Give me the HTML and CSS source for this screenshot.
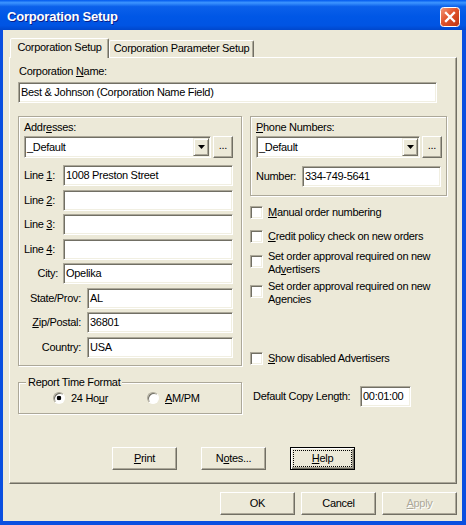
FILE: index.html
```html
<!DOCTYPE html>
<html lang="en">
<head>
  <meta charset="UTF-8" />
  <title>Corporation Setup</title>
  <link rel="stylesheet" href="styles.css">
</head>
<body>
  <div class="window">
    <div class="titlebar">
      <span class="title">Corporation Setup</span>
      <svg class="close" width="20" height="20" viewBox="0 0 20 20">
        <defs>
          <linearGradient id="closeGrad" x1="0" y1="0" x2="1" y2="1">
            <stop offset="0" stop-color="#f39a7c"/>
            <stop offset="0.45" stop-color="#e1542c"/>
            <stop offset="1" stop-color="#bf3410"/>
          </linearGradient>
        </defs>
        <rect x="0.5" y="0.5" width="19" height="19" rx="3" fill="url(#closeGrad)" stroke="#fff"/>
        <path d="M6 6 L14 14 M14 6 L6 14" stroke="#fff" stroke-width="2.3" stroke-linecap="square"/>
      </svg>
    </div>

    <div class="dialog">
      <div class="tabs">
        <div class="tab active">Corporation Setup</div>
        <div class="tab other">Corporation Parameter Setup</div>
      </div>

      <div class="panel">
        <div class="field-label">Corporation <u>N</u>ame:</div>
        <div class="edit name-edit">Best &amp; Johnson (Corporation Name Field)</div>

        <div class="columns">
          <div class="col-left">
            <div class="group addr-group">
              <div class="group-label">Addr<u>e</u>sses:</div>
              <div class="combo-row">
                <div class="combo addr-combo">
                  <span class="combo-text">_Default</span>
                  <span class="drop-btn"><svg width="7" height="4" viewBox="0 0 7 4"><polygon points="0,0 7,0 3.5,4" fill="#000"/></svg></span>
                </div>
                <div class="btn dots">...</div>
              </div>
              <div class="addr-rows">
                <div class="row"><span class="row-label">Line <u>1</u>:</span><div class="edit">1008 Preston Street</div></div>
                <div class="row"><span class="row-label">Line <u>2</u>:</span><div class="edit"></div></div>
                <div class="row"><span class="row-label">Line <u>3</u>:</span><div class="edit"></div></div>
                <div class="row"><span class="row-label">Line <u>4</u>:</span><div class="edit"></div></div>
                <div class="row"><span class="row-label right">City:</span><div class="edit">Opelika</div></div>
                <div class="row wide"><span class="row-label right">State/Prov:</span><div class="edit">AL</div></div>
                <div class="row wide"><span class="row-label right"><u>Z</u>ip/Postal:</span><div class="edit">36801</div></div>
                <div class="row wide"><span class="row-label right">Country:</span><div class="edit">USA</div></div>
              </div>
            </div>

            <fieldset class="report">
              <legend>Report Time Format</legend>
              <div class="radios">
                <span class="radio-item first"><span class="radio checked"></span><span>24 Ho<u>u</u>r</span></span>
                <span class="radio-item"><span class="radio"></span><span><u>A</u>M/PM</span></span>
              </div>
            </fieldset>
          </div>

          <div class="col-right">
            <div class="group phone-group">
              <div class="group-label"><u>P</u>hone Numbers:</div>
              <div class="combo-row">
                <div class="combo phone-combo">
                  <span class="combo-text">_Default</span>
                  <span class="drop-btn"><svg width="7" height="4" viewBox="0 0 7 4"><polygon points="0,0 7,0 3.5,4" fill="#000"/></svg></span>
                </div>
                <div class="btn dots">...</div>
              </div>
              <div class="row number-row"><span class="number-label">Number:</span><div class="edit">334-749-5641</div></div>
            </div>

            <div class="checks">
              <div class="check"><span class="box"></span><span><u>M</u>anual order numbering</span></div>
              <div class="check"><span class="box"></span><span><u>C</u>redit policy check on new orders</span></div>
              <div class="check two"><span class="box"></span><span>Set order approval required on new<br>Ad<u>v</u>ertisers</span></div>
              <div class="check two"><span class="box"></span><span>Set order approval required on new<br>A<u>g</u>encies</span></div>
              <div class="check show-disabled"><span class="box"></span><span><u>S</u>how disabled Advertisers</span></div>
            </div>

            <div class="copy-row">
              <span class="copy-label">Default Copy Length:</span>
              <div class="edit copy-edit">00:01:00</div>
            </div>
          </div>
        </div>

        <div class="panel-buttons">
          <div class="btn small"><span><u>P</u>rint</span></div>
          <div class="btn small"><span>N<u>o</u>tes...</span></div>
          <div class="btn small focus"><span><u>H</u>elp</span></div>
        </div>
      </div>

      <div class="footer">
        <div class="btn large">OK</div>
        <div class="btn large">Cancel</div>
        <div class="btn large disabled"><span><u>A</u>pply</span></div>
      </div>
    </div>
  </div>
</body>
</html>
```

FILE: styles.css
```css
* {
  margin: 0;
  padding: 0;
  box-sizing: border-box;
}

body {
  font-family: 'Liberation Sans', Arial, sans-serif;
  font-size: 11px;
  line-height: 13px;
  letter-spacing: -0.3px;
  color: #000;
  background: #fff;
}

.window {
  width: 466px;
  height: 525px;
  display: flex;
  flex-direction: column;
  background: #0a4fe0;
}

/* title bar */
.titlebar {
  height: 30px;
  flex: none;
  display: flex;
  align-items: center;
  justify-content: space-between;
  padding: 3px 6px 0 7px;
  background: linear-gradient(#0058ee 0%, #3d95ff 9%, #0b60ea 22%, #0057e6 55%, #0054e3 85%, #0047cc 100%);
}

.title {
  font-size: 13px;
  font-weight: bold;
  letter-spacing: -0.2px;
  color: #fff;
  text-shadow: 1px 1px #0a1e8a;
}

.close {
  display: block;
}

/* dialog body */
.dialog {
  flex: 1;
  margin: 0 4px 4px 3px;
  padding: 8px 5px 6px 6px;
  background: #ece9d8;
  display: flex;
  flex-direction: column;
}

.tabs {
  display: flex;
  align-items: flex-end;
  height: 19px;
  padding-left: 1px;
}

.tab {
  height: 17px;
  text-align: center;
  line-height: 15px;
  border: 1px solid;
  border-bottom: none;
  border-color: #fff #716f64 transparent #fff;
  border-radius: 2px 2px 0 0;
  box-shadow: inset -1px 0 #aca899;
  background: #ece9d8;
}

.tab.active {
  width: 99px;
  height: 20px;
  line-height: 17px;
  margin-bottom: -1px;
  z-index: 1;
}

.tab.other {
  width: 145px;
}

.panel {
  height: 427px;
  padding: 7px 8px 13px 8px;
  border: 1px solid;
  border-color: #fff #716f64 #716f64 #fff;
  box-shadow: inset -1px -1px #aca899;
  display: flex;
  flex-direction: column;
}

.field-label {
  padding-left: 1px;
}

/* sunken text fields */
.edit {
  height: 21px;
  padding: 0 2px;
  line-height: 19px;
  white-space: nowrap;
  overflow: hidden;
  background: #fff;
  border: 1px solid;
  border-color: #aca899 #fff #fff #aca899;
  box-shadow: inset 1px 1px #716f64, inset -1px -1px #f1efe2;
}

.name-edit {
  width: 419px;
  margin-top: 4px;
}

.columns {
  display: flex;
  gap: 8px;
  margin-top: 13px;
}

.col-left {
  width: 224px;
}

.col-right {
  width: 197px;
}

/* etched group boxes */
.group {
  border: 1px solid #aca899;
  box-shadow: inset 1px 1px #fff, 1px 1px #fff;
}

.addr-group {
  padding: 4px 8px 7px 5px;
}

.phone-group {
  padding: 4px 4px 8px 5px;
}

.combo-row {
  display: flex;
  align-items: center;
  gap: 2px;
  margin-top: 2px;
}

.combo {
  height: 22px;
  display: flex;
  align-items: center;
  padding: 0 1px 0 2px;
  background: #fff;
  border: 1px solid;
  border-color: #aca899 #fff #fff #aca899;
  box-shadow: inset 1px 1px #716f64, inset -1px -1px #f1efe2;
}

.addr-combo {
  width: 187px;
}

.phone-combo {
  width: 164px;
}

.combo-text {
  flex: 1;
}

.drop-btn {
  width: 16px;
  height: 18px;
  display: flex;
  align-items: center;
  justify-content: center;
  background: #ece9d8;
  border: 1px solid;
  border-color: #f1efe2 #716f64 #716f64 #f1efe2;
  box-shadow: inset 1px 1px #fff, inset -1px -1px #aca899;
}

.drop-btn svg {
  display: block;
}

/* raised buttons */
.btn {
  height: 23px;
  display: flex;
  align-items: center;
  justify-content: center;
  background: #ece9d8;
  border: 1px solid;
  border-color: #fff #716f64 #716f64 #fff;
  box-shadow: inset -1px -1px #aca899;
}

.dots {
  width: 20px;
  height: 22px;
  padding-bottom: 3px;
}

.btn.small {
  width: 65px;
}

.btn.large {
  width: 75px;
}

.btn.focus {
  border-color: #000;
  box-shadow: inset 1px 1px #fff, inset -1px -1px #716f64, inset -2px -2px #aca899;
  outline: 1px dotted #000;
  outline-offset: -4px;
}

.btn.disabled {
  color: #aca899;
  text-shadow: 1px 1px #fff;
}

/* address rows */
.addr-rows {
  margin-top: 7px;
  display: flex;
  flex-direction: column;
  gap: 3.5px;
}

.row {
  display: flex;
  align-items: center;
}

.row .edit {
  flex: 1;
}

.row-label {
  width: 39px;
  flex: none;
}

.row-label.right {
  text-align: right;
  padding-right: 5px;
}

.row.wide .row-label {
  width: 63px;
  padding-right: 6px;
}

.number-row {
  margin-top: 8px;
}

.number-row .edit {
  margin-right: 1px;
}

.number-label {
  width: 46px;
  flex: none;
}

/* report time format */
.report {
  margin-top: 10px;
  padding: 0 7px 8px 7px;
  border: 1px solid #aca899;
  box-shadow: inset 1px 1px #fff, 1px 1px #fff;
}

.report legend {
  padding: 0 2px;
  background: #ece9d8;
}

.radios {
  display: flex;
  margin-top: 3px;
  padding-left: 27px;
}

.radio-item {
  display: flex;
  align-items: center;
  gap: 6px;
}

.radio-item.first {
  width: 94px;
}

.radio {
  width: 12px;
  height: 12px;
  border-radius: 50%;
  background: #fff;
  border: 1px solid;
  border-color: #aca899 #fff #fff #aca899;
  box-shadow: inset 1px 1px #716f64;
}

.radio.checked {
  background: radial-gradient(circle, #000 0 2px, #fff 2.6px);
}

/* checkboxes */
.checks {
  margin-top: 4px;
}

.check {
  height: 24px;
  display: flex;
  align-items: center;
}

.check.two {
  height: 30px;
}

.check.two .box {
  margin-top: -3px;
}

.check.show-disabled {
  margin-top: 38px;
}

.box {
  width: 13px;
  height: 13px;
  flex: none;
  margin-right: 5px;
  background: #fff;
  border: 1px solid;
  border-color: #aca899 #fff #fff #aca899;
  box-shadow: inset 1px 1px #716f64, inset -1px -1px #f1efe2;
}

.copy-row {
  display: flex;
  align-items: center;
  margin-top: 16px;
  padding-left: 3px;
}

.copy-label {
  width: 107px;
  flex: none;
}

.copy-edit {
  width: 51px;
}

/* button rows */
.panel-buttons {
  margin-top: auto;
  padding-left: 94px;
  display: flex;
  gap: 24px;
}

.footer {
  margin-top: 8px;
  display: flex;
  justify-content: flex-end;
  gap: 6px;
}
```
